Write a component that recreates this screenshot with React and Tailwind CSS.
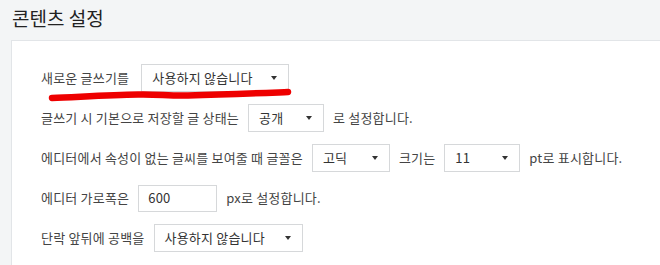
import React from "react";

const font = { fontFamily: '"Noto Sans CJK KR", "Noto Sans", sans-serif' };

// 작은 드롭다운 (화살표 포함)
const Select = ({ value, width }) => (
  <div
    className={`h-[28px] ${width} flex items-center justify-between bg-white border border-[#d6d8da] pl-[10px] pr-[11px] text-[#333] shrink-0`}
  >
    <span>{value}</span>
    <svg width="6" height="4" viewBox="0 0 6 4">
      <path d="M0 0 L6 0 L3 4 Z" fill="#333" />
    </svg>
  </div>
);

const Row = ({ children }) => (
  <div className="flex items-center gap-[9px] h-[28px]">{children}</div>
);

export default function App() {
  return (
    <div
      className="w-[660px] h-[265px] overflow-hidden bg-[#f3f5f6] pl-[11px] text-[13px] tracking-[0.2px] text-[#444]"
      style={font}
    >
      <h1 className="pt-[2px] pl-[1px] h-[40px] text-[19px] leading-[32px] tracking-normal text-[#222]">
        콘텐츠 설정
      </h1>
      <div className="relative bg-white border-l border-t border-[#e2e5e8] h-[225px] pl-[29px] pt-[23px] flex flex-col gap-[12px]">
        <Row>
          <span className="pr-[3px]">새로운 글쓰기를</span>
          <Select value="사용하지 않습니다" width="w-[148px]" />
        </Row>
        <Row>
          <span>글쓰기 시 기본으로 저장할 글 상태는</span>
          <Select value="공개" width="w-[76px]" />
          <span>로 설정합니다.</span>
        </Row>
        <Row>
          <span>에디터에서 속성이 없는 글씨를 보여줄 때 글꼴은</span>
          <Select value="고딕" width="w-[78px]" />
          <span>크기는</span>
          <Select value="11" width="w-[76px]" />
          <span>pt로 표시합니다.</span>
        </Row>
        <Row>
          <span>에디터 가로폭은</span>
          <div className="h-[27px] w-[79px] flex items-center bg-white border border-[#d6d8da] pl-[9px] text-[#333]">
            600
          </div>
          <span>px로 설정합니다.</span>
        </Row>
        <Row>
          <span>단락 앞뒤에 공백을</span>
          <Select value="사용하지 않습니다" width="w-[149px]" />
        </Row>

        {/* 빨간 펜 밑줄 표시 */}
        <svg
          className="absolute left-[36px] top-[46px] pointer-events-none"
          width="250"
          height="16"
          viewBox="0 0 250 16"
        >
          <path
            d="M4 11 C 30 10, 60 8, 90 7.5 C 110 7, 120 9, 140 8.5 C 180 7.5, 215 6, 240 5"
            stroke="#ee0000"
            strokeWidth="6.5"
            strokeLinecap="round"
            fill="none"
          />
        </svg>
      </div>
    </div>
  );
}
